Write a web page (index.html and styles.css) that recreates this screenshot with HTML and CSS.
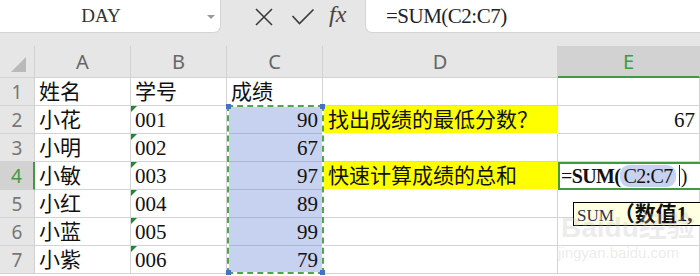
FILE: index.html
```html
<!DOCTYPE html>
<html>
<head>
    <title>Sheet</title>
    <link rel="stylesheet" href="styles.css">
</head>
<body>
    <div class="topbar">
        <div class="namebox">
            <span class="name">DAY</span>
            <span class="drop"></span>
        </div>
        <div class="tools">
            <svg class="ico-x" width="20" height="20" viewBox="0 0 20 20"><path d="M2 2 L18 18 M18 2 L2 18" stroke="#3a3a3a" stroke-width="1.6" fill="none"/></svg>
            <svg class="ico-ok" width="24" height="20" viewBox="0 0 24 20"><path d="M1.5 9 L8.5 16.5 L22.5 2.5" stroke="#3a3a3a" stroke-width="1.6" fill="none"/></svg>
            <span class="fx">fx</span>
        </div>
        <div class="formula">=SUM(C2:C7)</div>
    </div>

    <div class="sheet">
        <div class="hd corner"><span class="tri"></span></div>
        <div class="hd col">A</div>
        <div class="hd col">B</div>
        <div class="hd col">C</div>
        <div class="hd col">D</div>
        <div class="hd col active-col">E</div>

        <div class="hd row">1</div>
        <div class="cell">姓名</div>
        <div class="cell">学号</div>
        <div class="cell">成绩</div>
        <div class="cell"></div>
        <div class="cell"></div>

        <div class="hd row">2</div>
        <div class="cell">小花</div>
        <div class="cell txt">001</div>
        <div class="cell num sel-bg">90</div>
        <div class="cell hl">找出成绩的最低分数？</div>
        <div class="cell num">67</div>

        <div class="hd row">3</div>
        <div class="cell">小明</div>
        <div class="cell txt">002</div>
        <div class="cell num sel-bg">67</div>
        <div class="cell"></div>
        <div class="cell"></div>

        <div class="hd row active-row">4</div>
        <div class="cell">小敏</div>
        <div class="cell txt">003</div>
        <div class="cell num sel-bg">97</div>
        <div class="cell hl">快速计算成绩的总和</div>
        <div class="cell editing">=<b>SUM(</b><span class="ref">C2:C7</span><span class="caret"></span>)</div>

        <div class="hd row">5</div>
        <div class="cell">小红</div>
        <div class="cell txt">004</div>
        <div class="cell num sel-bg">89</div>
        <div class="cell"></div>
        <div class="cell"></div>

        <div class="hd row">6</div>
        <div class="cell">小蓝</div>
        <div class="cell txt">005</div>
        <div class="cell num sel-bg">99</div>
        <div class="cell"></div>
        <div class="cell"></div>

        <div class="hd row">7</div>
        <div class="cell">小紫</div>
        <div class="cell txt">006</div>
        <div class="cell num sel-bg">79</div>
        <div class="cell"></div>
        <div class="cell"></div>

        <!-- copy range C2:C7, drawn over the cells -->
        <div class="selection">
            <span class="h tl"></span><span class="h tr"></span>
            <span class="h bl"></span><span class="h br"></span>
        </div>

        <div class="tip"><span class="tip-fn">SUM</span><b>（数值1,</b></div>
        <div class="mark">
            <div class="mark-big">Baidu经验</div>
            <div class="mark-small">jingyan.baidu.com</div>
        </div>
    </div>
</body>
</html>
```

FILE: styles.css
```css
body {
    margin: 0;
    width: 700px;
    height: 276px;
    overflow: hidden;
    background-color: #fff;
    font-family: "Liberation Serif", "Noto Sans CJK SC", serif;
}
* {
    box-sizing: border-box;
}
/* formula bar */
.topbar {
    display: grid;
    grid-template-columns: 221px 144px 1fr;
    height: 46px;
    background-color: #e6e6e6;
    align-items: start;
}
.namebox {
    height: 33px;
    background-color: #fff;
    border-right: 1px solid #d4d4d4;
    border-bottom: 1px solid #d4d4d4;
    border-radius: 0 0 7px 0;
    display: flex;
    align-items: center;
    position: relative;
}
.name {
    flex-grow: 1;
    text-align: center;
    font-size: 19px;
    color: #333;
    padding-right: 18px;
}
.drop {
    position: absolute;
    right: 5px;
    top: 15px;
    border-left: 4px solid transparent;
    border-right: 4px solid transparent;
    border-top: 4px solid #999;
}
.tools {
    height: 33px;
    display: flex;
    align-items: center;
}
.ico-x {
    margin-left: 33px;
}
.ico-ok {
    margin-left: 17px;
}
.fx {
    margin-left: 14px;
    font-style: italic;
    font-size: 24px;
    color: #444;
    margin-top: -4px;
}
.formula {
    height: 33px;
    background-color: #fff;
    border-left: 1px solid #d4d4d4;
    border-bottom: 1px solid #d4d4d4;
    border-radius: 0 0 0 7px;
    padding-left: 20px;
    line-height: 32px;
    font-size: 21px;
    color: #222;
    letter-spacing: -0.5px;
}
/* grid */
.sheet {
    display: grid;
    grid-template-columns: 35px 96px 96px 96px 235px 142px;
    grid-template-rows: 32px repeat(7, 28px);
    position: relative;
}
.hd {
    background-color: #e6e6e6;
    border-right: 1px solid #d2d2d2;
    border-bottom: 1px solid #d2d2d2;
    font-family: "Noto Sans", "Liberation Sans", sans-serif;
    color: #666;
    display: flex;
    align-items: center;
    justify-content: center;
}
.col {
    font-size: 20px;
}
.row {
    font-size: 19px;
    color: #777;
}
.corner {
    position: relative;
}
.tri {
    position: absolute;
    right: 8px;
    bottom: 5px;
    border-left: 15px solid transparent;
    border-bottom: 15px solid #b9b9b9;
}
.active-col {
    background-color: #d2d2d2;
    color: #3f9b3f;
    border-bottom: 2px solid #3f9b3f;
}
.active-row {
    background-color: #d2d2d2;
    color: #3f9b3f;
    border-right: 2px solid #3f9b3f;
}
.cell {
    border-right: 1px solid #d4d4d4;
    border-bottom: 1px solid #d4d4d4;
    font-size: 21px;
    line-height: 28px;
    padding: 0 4px;
    color: #111;
    white-space: nowrap;
    overflow: hidden;
    position: relative;
}
.num {
    text-align: right;
}
.txt::before {
    content: "";
    position: absolute;
    left: 0;
    top: 0;
    border-top: 6px solid #1e8a2e;
    border-right: 6px solid transparent;
}
.sel-bg {
    background-color: #c6d2ef;
    border-bottom-color: #aab6d4;
}
.hl {
    background-color: #ffff00;
    border-right-color: #ffff00;
    padding-left: 5px;
    margin-bottom: 1px;
    border-bottom: none;
}
.editing {
    border: 2px solid #3f9b3f;
    border-right: none;
    font-size: 20px;
    line-height: 24px;
    padding-left: 1px;
    letter-spacing: -0.6px;
    overflow: visible;
}
.editing b {
    font-weight: bold;
}
.ref {
    background-color: #c6d2ef;
    border-radius: 9px;
    padding: 0 3px;
}
.caret {
    display: inline-block;
    width: 1px;
    height: 21px;
    background-color: #222;
    vertical-align: -3px;
    margin: 0 1px 0 3px;
}
/* copy range */
.selection {
    position: absolute;
    left: 227px;
    top: 59px;
    width: 97px;
    height: 169px;
    border: 2px solid #fff;
}
.selection::before {
    content: "";
    position: absolute;
    inset: -2px;
    border: 2px dashed #4ca64c;
}
.h {
    position: absolute;
    width: 5px;
    height: 5px;
    background-color: #4472c4;
}
.tl { left: -3px; top: -3px; }
.tr { right: -3px; top: -3px; }
.bl { left: -3px; bottom: -3px; }
.br { right: -3px; bottom: -3px; }
/* formula tooltip */
.tip {
    position: absolute;
    left: 573px;
    top: 156px;
    width: 140px;
    height: 24px;
    background-color: #ffffe1;
    border: 1px solid #000;
    padding-left: 3px;
    line-height: 22px;
    white-space: nowrap;
}
.tip-fn {
    font-size: 17px;
    color: #2b3550;
}
.tip b {
    color: #111;
    font-size: 21px;
}
/* watermark */
.mark {
    position: absolute;
    left: 561px;
    top: 166px;
    color: rgba(190, 190, 190, 0.3);
    font-family: "Liberation Sans", "Noto Sans CJK SC", sans-serif;
    pointer-events: none;
}
.mark-big {
    font-size: 28px;
    font-weight: bold;
    line-height: 32px;
}
.mark-small {
    font-size: 15px;
    margin-left: -3px;
}
```
